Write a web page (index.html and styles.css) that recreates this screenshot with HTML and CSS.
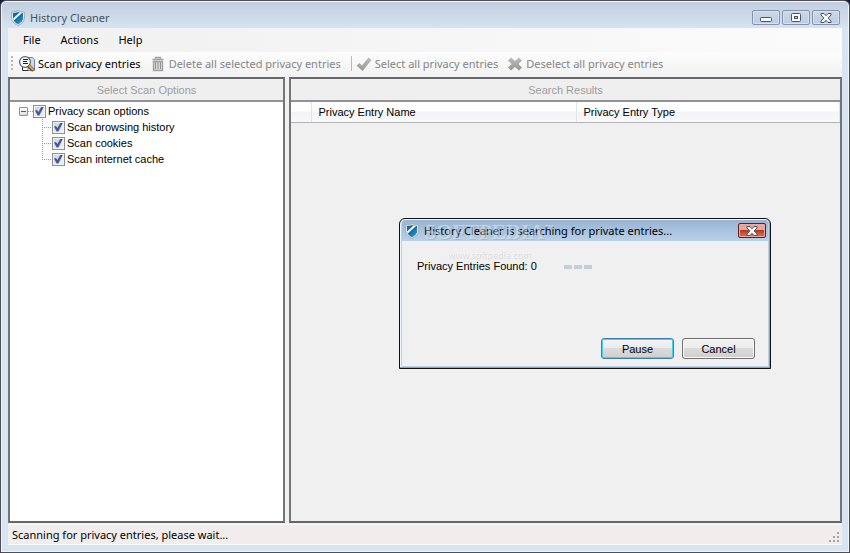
FILE: index.html
```html
<!DOCTYPE html>
<html lang="en">
<head>
<meta charset="utf-8">
<title>History Cleaner</title>
<link rel="stylesheet" href="styles.css">
</head>
<body>
<svg class="defs" aria-hidden="true">
  <defs>
    <linearGradient id="blue" x1="0" y1="0" x2="1" y2="1"><stop offset="0" stop-color="#0a4d85"/><stop offset="1" stop-color="#28a4d6"/></linearGradient>
    <linearGradient id="grey" x1="0" y1="0" x2="0" y2="1"><stop offset="0" stop-color="#bdbdbd"/><stop offset="1" stop-color="#969696"/></linearGradient>
    <symbol id="shield" viewBox="0 0 14 16">
      <path d="M7 .5 9 1.500 13.500 2V8Q13 13 7 15.500 1 13 .5 8V2L5 1.500Z" fill="#e6e8e8" stroke="#a9adb0"/>
      <path d="M7 2 9 2.800 12 3V8Q11.500 11.800 7 14 2.500 11.800 2 8V3L5 2.800Z" fill="#0f6ba8"/>
      <path d="M2 8.500 8.500 2.500 11 3 2.800 10.500Z" fill="#eef8fd"/>
      <path d="M12 4V8Q11.500 11.800 7 14 5 13 3.500 11.500Z" fill="url(#blue)"/>
    </symbol>
    <symbol id="cross" viewBox="0 0 12 10">
      <path d="M1 .5H4L6 2.700 8 .5H11V2L8.200 5 11 8V9.500H8L6 7.300 4 9.500H1V8L3.800 5 1 2Z" fill="#f7f7f7" stroke="#4e5263"/>
    </symbol>
  </defs>
</svg>
<main class="window">
  <header class="titlebar">
    <svg class="shield"><use href="#shield"/></svg>
    <h1>History Cleaner</h1>
    <div class="controls">
      <button type="button" aria-label="Minimize"><svg width="12" height="10"><rect x=".5" y="4.500" width="11" height="4" rx="1" fill="#f7f7f7" stroke="#4e5263"/></svg></button>
      <button type="button" aria-label="Maximize"><svg width="12" height="10"><rect x="1.500" y=".5" width="9" height="8" rx="1" fill="#f7f7f7" stroke="#4e5263"/><rect x="4.500" y="3.500" width="3" height="2" fill="#b8c8da" stroke="#4e5263"/></svg></button>
      <button type="button" aria-label="Close"><svg width="12" height="10"><use href="#cross"/></svg></button>
    </div>
  </header>
  <div class="client">
    <nav class="menu">
      <button type="button">File</button>
      <button type="button">Actions</button>
      <button type="button">Help</button>
    </nav>
    <div class="toolbar">
      <span class="grip"></span>
      <button type="button" class="tool"><svg viewBox="0 0 16 16"><path d="M9 1.500H13.500L15.500 3.500V14.500H9Z" fill="#c9daf5" stroke="#6f83b5"/><path d="M3.500 11V14.500H9" fill="#fff" stroke="#333"/><circle cx="6" cy="6" r="5.400" fill="#fafcfd" stroke="#56636c" stroke-width="1.200"/><path d="M4 3.500H9M4 5.500H8M4 7.500H9" stroke="#222"/><path d="M9.500 9.500 14.500 14.500" stroke="#5c3510" stroke-width="3.600"/><path d="M10 9.500 14.500 14" stroke="#f2a32d" stroke-width="2.200"/></svg><span>Scan privacy entries</span></button>
      <button type="button" class="tool" disabled><svg viewBox="0 0 16 16"><path d="M5.500 2.500V1.500H10.500V2.500M2.500 3.500H13.500M3.500 5.500H12.500V14.500H3.500Z" fill="#d5d5d5" stroke="#a2a2a2" stroke-width="1.400"/><path d="M5.500 6V13M8 6V13M10.500 6V13" stroke="#999"/></svg><span>Delete all selected privacy entries</span></button>
      <span class="separator"></span>
      <button type="button" class="tool" disabled><svg viewBox="0 0 16 16"><path d="M.5 9.500 3.500 7 6 9.500 12.500 1.500 15.500 4 6.500 15Z" fill="url(#grey)"/></svg><span>Select all privacy entries</span></button>
      <button type="button" class="tool" disabled><svg viewBox="0 0 16 16"><path d="M4 1.500 8 5 12 1.500 15 4.500 11.500 8 15 11.500 12 14.500 8 11 4 14.500 1 11.500 4.500 8 1 4.500Z" fill="url(#grey)"/></svg><span>Deselect all privacy entries</span></button>
    </div>
    <div class="panels">
      <section class="panel options">
        <h2>Select Scan Options</h2>
        <div class="tree">
          <div class="node root"><button type="button" class="expander" aria-label="Collapse"></button><span class="dots"></span><label><input type="checkbox" checked>Privacy scan options</label></div>
          <div class="children">
            <div class="node"><span class="dots"></span><label><input type="checkbox" checked>Scan browsing history</label></div>
            <div class="node"><span class="dots"></span><label><input type="checkbox" checked>Scan cookies</label></div>
            <div class="node"><span class="dots"></span><label><input type="checkbox" checked>Scan internet cache</label></div>
          </div>
        </div>
      </section>
      <section class="panel results">
        <h2>Search Results</h2>
        <table>
          <colgroup><col class="col-icon"><col class="col-name"><col></colgroup>
          <thead><tr><th></th><th>Privacy Entry Name</th><th>Privacy Entry Type</th></tr></thead>
        </table>
      </section>
    </div>
    <footer class="status"><span>Scanning for privacy entries, please wait...</span>
      <svg width="11" height="11" fill="#a6a3a3"><path d="M8 0h2v2h-2zM4 4h2v2h-2zM8 4h2v2h-2zM0 8h2v2h-2zM4 8h2v2h-2zM8 8h2v2h-2z"/></svg>
    </footer>
  </div>
</main>
<section class="dialog" role="dialog" aria-labelledby="dialog-title">
  <header class="dialog-title">
    <svg class="shield"><use href="#shield"/></svg>
    <h2 id="dialog-title">History Cleaner is searching for private entries...</h2>
    <button type="button" class="dialog-close" aria-label="Close"><svg width="12" height="10"><use href="#cross"/></svg></button>
  </header>
  <div class="dialog-body">
    <div class="progress"><span>Privacy Entries Found: 0</span><span class="blocks"><i></i><i></i><i></i></span></div>
    <div class="actions"><button type="button" class="default">Pause</button><button type="button">Cancel</button></div>
  </div>
  <div class="watermark"><b>SOFTPEDIA<sup>™</sup></b><span>www.softpedia.com</span></div>
</section>
</body>
</html>
```
FILE: styles.css
```css
* { box-sizing: border-box; }
body {
  margin: 0;
  background: #17173a;
  font: 11px/16px "Noto Sans", sans-serif;
  color: #000;
}
h1, h2 { margin: 0; font-size: inherit; font-weight: normal; }
button { margin: 0; padding: 0; border: 0; background: none; font: inherit; color: inherit; }
svg { display: block; flex: none; }
.defs { position: absolute; width: 0; height: 0; }
.shield { width: 14px; height: 16px; }

.window {
  display: flex;
  flex-direction: column;
  height: 100vh;
  padding: 0 7px 7px;
  border: 1px solid #504f55;
  border-radius: 6px 6px 0 0;
  background: linear-gradient(#bfcddd, #d7e5f2 28px);
  box-shadow: inset 0 0 0 1px #edf4fa;
}
.titlebar { display: flex; align-items: center; height: 27px; padding: 6px 2px 0 3px; color: #465362; }
.titlebar h1 { margin-left: 5px; }
.controls { display: flex; gap: 2px; margin-left: auto; }
.controls button {
  display: grid;
  place-items: center;
  width: 28px;
  height: 15px;
  border: 1px solid #8492b2;
  border-radius: 2px;
  background: linear-gradient(#cad8e7, #bdccdf);
  box-shadow: inset 0 0 0 1px #d5e1ee;
}
.client { flex: 1; display: flex; flex-direction: column; min-height: 0; background: #f0f0f0; }
.menu {
  display: flex;
  gap: 20px;
  height: 24px;
  padding-left: 15px;
  background: linear-gradient(90deg, #f0f0f0, #fbfbfb);
}
.toolbar {
  display: flex;
  align-items: center;
  height: 25px;
  padding: 0 0 2px 3px;
  background: linear-gradient(#fdfdfd, #f1f1f1);
}
.grip { width: 2px; height: 15px; margin-right: 6px; background: repeating-linear-gradient(#b9b9b9 0 2px, transparent 2px 4px); }
.tool { display: flex; align-items: center; gap: 3px; margin-right: 9px; white-space: nowrap; }
.tool svg { width: 16px; height: 16px; }
.tool:disabled { color: #858585; }
.separator { width: 1px; height: 15px; margin: 0 4px 0 1px; background: #b8b8b8; }

.panels { flex: 1; display: grid; grid-template-columns: 277px 1fr; gap: 4px; min-height: 0; font: 11px/16px "Liberation Sans", sans-serif; }
.panel { border: 2px solid #85868a; border-color: #66676a #747579 #66676a #747579; background: #f0f0f0; overflow: hidden; }
.panel h2 { height: 23px; padding-top: 3px; border-bottom: 2px solid #929295; background: #efefef; color: #9d9d9d; text-align: center; }
.options { background: #fff; }
.tree { padding: 1px 0 0 9px; }
.node { display: flex; align-items: center; height: 16px; }
.node label { display: flex; align-items: center; gap: 2px; white-space: nowrap; }
.dots { width: 10px; height: 1px; background: repeating-linear-gradient(90deg, #999 0 1px, transparent 1px 2px); }
.root .dots { width: 5px; }
.expander {
  width: 9px;
  height: 9px;
  border: 1px solid #929292;
  border-radius: 1px;
  background: linear-gradient(#3c5ea8, #3c5ea8) center / 5px 1px no-repeat, linear-gradient(#fff, #ddd);
}
.children {
  position: relative;
  margin-left: 23px;
}
.children::before {
  content: "";
  position: absolute;
  top: 0;
  left: 0;
  width: 1px;
  height: 40px;
  background: repeating-linear-gradient(#999 0 1px, transparent 1px 2px);
}
input[type="checkbox"] {
  appearance: none;
  width: 13px;
  height: 13px;
  margin: 0;
  border: 1px solid #8e8f8f;
  background: linear-gradient(135deg, #c9d0d8, #f5f5f5);
  box-shadow: inset 0 0 0 1px #f4f4f4;
  display: grid;
  place-items: center;
}
input[type="checkbox"]::before {
  content: "";
  width: 9px;
  height: 9px;
  background: #3f5a9e;
  clip-path: polygon(0 45%, 22% 38%, 38% 62%, 72% 0, 100% 0, 48% 100%, 30% 100%);
}

table { width: 100%; table-layout: fixed; border-collapse: collapse; }
.col-icon { width: 20px; }
.col-name { width: 265px; }
th {
  height: 20px;
  padding: 0 0 0 7px;
  border-right: 1px solid #e3e5e8;
  border-bottom: 1px solid #b5b5b8;
  background: linear-gradient(#fff 45%, #f2f3f5 50%, #f7f8fa);
  text-align: left;
  font-weight: normal;
}

.status { display: flex; align-items: center; height: 21px; margin-top: 1px; padding: 0 2px 0 4px; border: solid #fafafa; border-width: 1px 0; background: #f0edec; }
.status svg { margin: 6px 0 0 auto; }

.dialog {
  position: absolute;
  top: 218px;
  left: 399px;
  width: 372px;
  height: 151px;
  display: flex;
  flex-direction: column;
  border: 1px solid #111;
  border-radius: 6px 6px 0 0;
  background: #b9d1ea;
  box-shadow: inset -1px -1px #35c8eb, inset 1px 1px #edf7ff;
  padding: 1px 2px 2px;
}
.dialog-title { display: flex; align-items: center; height: 21px; padding: 0 2px 0 3px; background: linear-gradient(#98b4d2, #b9d1ea); border-radius: 4px 4px 0 0; }
.dialog-title h2 { margin-left: 5px; white-space: nowrap; }
.dialog-close {
  display: grid;
  place-items: center;
  width: 28px;
  height: 15px;
  margin-left: auto;
  border: 1px solid #55222b;
  border-radius: 2px;
  background: linear-gradient(#e5a69b 45%, #b8391f 50%, #d27a63);
  box-shadow: inset 0 0 0 1px #eba99d;
}
.dialog-body { flex: 1; display: flex; flex-direction: column; justify-content: space-between; padding: 17px 13px 7px 15px; background: #f0f0f0; font: 11px/16px "Liberation Sans", sans-serif; }
.progress { display: flex; align-items: center; gap: 27px; }
.blocks { display: flex; gap: 2px; padding-top: 2px; }
.blocks i { width: 8px; height: 4px; background: #c3cddb; }
.actions { display: flex; justify-content: flex-end; gap: 8px; }
.actions button {
  width: 73px;
  height: 21px;
  border: 1px solid #707070;
  border-radius: 3px;
  background: linear-gradient(#f3f3f3, #ebebeb 49%, #dbdbdb 50%, #cfcfcf);
  box-shadow: inset 0 0 0 1px #f8f8f8;
}
.actions .default { border-color: #3c7fb1; box-shadow: inset 0 0 0 1px #45d0f5; }
.watermark {
  position: absolute;
  top: 0;
  left: 24px;
  width: 130px;
  display: grid;
  justify-items: center;
  color: rgba(255, 255, 255, .4);
  font: 9px/12px "Open Sans", sans-serif;
  text-shadow: 1px 1px rgba(90, 100, 120, .2);
  pointer-events: none;
}
.watermark b { height: 30px; font: bold 21px/26px "Liberation Serif", serif; white-space: nowrap; }
.watermark sup { font-size: 9px; line-height: 0; }
```
